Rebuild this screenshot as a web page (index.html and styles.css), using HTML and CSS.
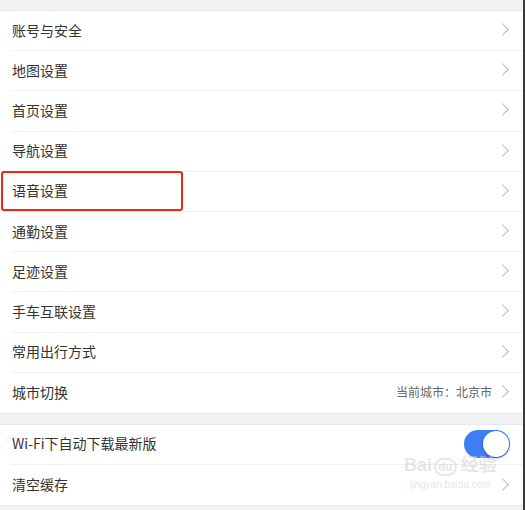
FILE: index.html
```html
<!DOCTYPE html>
<html lang="zh-CN">

<head>
    <meta charset="UTF-8">
    <title>设置</title>
    <link rel="stylesheet" href="styles.css">
</head>

<body>
    <div class="page">
        <ul class="group">
            <li class="row"><span class="label">账号与安全</span><span class="chevron"></span></li>
            <li class="row"><span class="label">地图设置</span><span class="chevron"></span></li>
            <li class="row"><span class="label">首页设置</span><span class="chevron"></span></li>
            <li class="row"><span class="label">导航设置</span><span class="chevron"></span></li>
            <li class="row marked"><span class="label">语音设置</span><span class="chevron"></span></li>
            <li class="row"><span class="label">通勤设置</span><span class="chevron"></span></li>
            <li class="row"><span class="label">足迹设置</span><span class="chevron"></span></li>
            <li class="row"><span class="label">手车互联设置</span><span class="chevron"></span></li>
            <li class="row"><span class="label">常用出行方式</span><span class="chevron"></span></li>
            <li class="row"><span class="label">城市切换</span><span class="value">当前城市：北京市</span><span class="chevron"></span></li>
        </ul>

        <ul class="group">
            <li class="row"><span class="label">Wi-Fi下自动下载最新版</span><span class="toggle on"><span class="knob"></span></span></li>
            <li class="row"><span class="label">清空缓存</span><span class="chevron"></span></li>
        </ul>

        <div class="watermark">
            <div class="wm-logo">Bai<span class="wm-du">du</span>经验</div>
            <div class="wm-url">jingyan.baidu.com</div>
        </div>
    </div>
</body>

</html>
```

FILE: styles.css
```css
body {
    margin: 0;
    font-family: "Noto Sans CJK SC", "Noto Sans", sans-serif;
    color: #333;
    background: #f2f2f2;
}

.page {
    position: relative;
    height: 510px;
    padding-top: 10px;
    box-sizing: border-box;
    border-right: 2px solid #3a3a3a;
    overflow: hidden;
}

.group {
    list-style: none;
    margin: 0 0 10px 0;
    padding: 0 0 0 11px;
    background: #fff;
    border-top: 1px solid #e8e8e8;
    border-bottom: 1px solid #e8e8e8;
}

.row {
    display: flex;
    align-items: center;
    height: 40.2px;
    box-sizing: border-box;
    padding-right: 14px;
    padding-bottom: 2px;
    border-bottom: 1px solid #f0f0f0;
    font-size: 14px;
}

.row:last-child {
    border-bottom: none;
}

.label {
    flex: 1;
    padding-left: 1px;
}

.value {
    font-size: 12px;
    color: #666;
    margin-right: 6px;
}

.chevron {
    width: 8px;
    height: 8px;
    border-top: 1px solid #b8b8b8;
    border-right: 1px solid #b8b8b8;
    transform: rotate(45deg);
    margin-right: 2px;
}

/* red highlight around 语音设置 */
.marked {
    position: relative;
}

.marked::after {
    content: "";
    position: absolute;
    left: -10px;
    top: -1px;
    width: 182px;
    height: 40px;
    border: 2.5px solid #f2241a;
    border-radius: 3px;
    box-sizing: border-box;
}

.toggle {
    width: 46px;
    height: 28px;
    border-radius: 14px;
    background: #3d7ef6;
    position: relative;
    margin-right: -1px;
    margin-top: 2px;
}

.knob {
    position: absolute;
    right: 1px;
    top: 1px;
    width: 26px;
    height: 26px;
    border-radius: 50%;
    background: #fff;
    box-shadow: 0 1px 3px rgba(0, 0, 0, 0.35);
}

.watermark {
    position: absolute;
    left: 404px;
    top: 454px;
    color: rgba(205, 205, 205, 0.5);
    font-family: "Liberation Sans", "Noto Sans CJK SC", sans-serif;
    text-align: center;
    white-space: nowrap;
    pointer-events: none;
}

.wm-logo {
    font-size: 18px;
    font-weight: 700;
    line-height: 22px;
}

.wm-du {
    font-size: 12px;
    border: 2px solid rgba(205, 205, 205, 0.5);
    border-radius: 9px;
    padding: 0 2px;
    margin: 0 4px 0 2px;
}

.wm-url {
    font-size: 10px;
    line-height: 14px;
}
```
